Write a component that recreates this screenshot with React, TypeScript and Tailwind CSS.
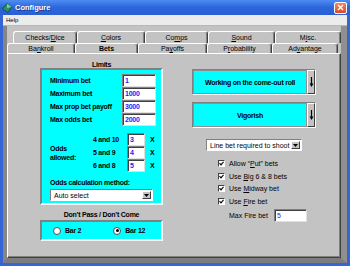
import type { ReactNode } from 'react';

const font = "font-['Liberation_Sans',Arial,sans-serif]";

function Tab({ w, children, active = false }: { w: number; children: ReactNode; active?: boolean }) {
  return (
    <div
      style={{ width: w }}
      className={`flex h-full shrink-0 items-center justify-center rounded-t-[3px] border-l border-t border-white bg-[#c3c3c3] text-[7px] leading-none text-black shadow-[inset_-1px_0_0_#808080] border-r border-r-[#404040] ${
        active ? 'relative z-10 -mb-px h-[calc(100%+1px)] font-bold' : ''
      }`}
    >
      {children}
    </div>
  );
}

function NumInput({ value, w }: { value: string; w: number }) {
  return (
    <div
      style={{ width: w }}
      className="flex h-[13px] items-center border border-t-[#808080] border-l-[#808080] border-b-[#e0e0e0] border-r-[#e0e0e0] bg-white pl-[2px] text-[7px] leading-none text-[#2020ff] shadow-[inset_1px_1px_0_#404040]"
    >
      {value}
    </div>
  );
}

function DropArrow() {
  return (
    <div className="flex h-full w-[9px] items-center justify-center border border-l-white border-t-white border-b-[#404040] border-r-[#404040] bg-[#c3c3c3]">
      <svg width="5" height="3" viewBox="0 0 5 3">
        <polygon points="0,0 5,0 2.5,3" fill="#000" />
      </svg>
    </div>
  );
}

function Select({ label, w }: { label: string; w: number }) {
  return (
    <div
      style={{ width: w }}
      className="flex h-[12px] items-center justify-between border border-t-[#808080] border-l-[#808080] border-b-white border-r-white bg-white p-px text-[7px] leading-none text-black"
    >
      <span className="pl-[2px]">{label}</span>
      <DropArrow />
    </div>
  );
}

function Check({ children }: { children: ReactNode }) {
  return (
    <div className="flex h-[12.7px] items-center gap-[4px] text-[7px] leading-none text-black">
      <div className="flex h-[7px] w-[7px] items-center justify-center border border-t-[#404040] border-l-[#404040] border-b-white border-r-white bg-white">
        <svg width="5" height="5" viewBox="0 0 5 5">
          <polyline points="0.5,2.2 2,3.8 4.5,0.8" fill="none" stroke="#000" strokeWidth="1.1" />
        </svg>
      </div>
      <span>{children}</span>
    </div>
  );
}

function Radio({ on, children }: { on?: boolean; children: ReactNode }) {
  return (
    <div className="flex items-center gap-[4px] text-[7px] font-bold leading-none tracking-[-0.25px] text-black">
      <div className="flex h-[8px] w-[8px] items-center justify-center rounded-full border border-[#505050] bg-white">
        {on && <div className="h-[3px] w-[3px] rounded-full bg-black" />}
      </div>
      <span>{children}</span>
    </div>
  );
}

function CyanButton({ label }: { label: string }) {
  return (
    <div className="flex h-[26px] w-[124px] border border-t-[#808080] border-l-[#808080] border-b-white border-r-white">
      <div className="flex flex-1 items-center justify-center border border-[#909090] bg-[#00ffff] text-[7px] font-bold leading-none tracking-[-0.25px] text-black">
        {label}
      </div>
      <div className="flex w-[8px] items-center justify-center border border-l-white border-t-white border-b-[#404040] border-r-[#404040] bg-[#c3c3c3]">
        <svg width="5" height="12" viewBox="0 0 5 12">
          <line x1="2.5" y1="1" x2="2.5" y2="9" stroke="#000" strokeWidth="1.2" />
          <polygon points="0.5,7.5 4.5,7.5 2.5,11" fill="#000" />
        </svg>
      </div>
    </div>
  );
}

export default function App() {
  const limitRows = [
    ['Minimum bet', '1'],
    ['Maximum bet', '1000'],
    ['Max prop bet payoff', '3000'],
    ['Max odds bet', '2000'],
  ];
  const odds = [
    ['4 and 10', '3'],
    ['5 and 9', '4'],
    ['6 and 8', '5'],
  ];

  return (
    <div className={`${font} flex h-[266px] w-[350px] flex-col overflow-hidden bg-[#3565d4]`}>
      {/* title bar */}
      <div className="flex h-[15px] shrink-0 items-center justify-between bg-gradient-to-b from-[#4f8cf0] via-[#2c66dc] to-[#2a5fd6] pl-[2px] pr-[3px]">
        <div className="flex items-center gap-[3px]">
          <svg width="10" height="10" viewBox="0 0 10 10">
            <polygon points="5,0.5 9.5,4 6,9.5 0.5,6" fill="#2f8f6a" stroke="#0f4a35" strokeWidth="0.8" />
            <polygon points="5,0.5 9.5,4 5,5 " fill="#6fd0a8" />
          </svg>
          <span className="text-[7.5px] font-bold leading-none text-white [text-shadow:1px_1px_0_#1a3a8a]">Configure</span>
        </div>
        <div className="flex h-[12px] w-[13px] items-center justify-center rounded-[2px] border border-white bg-gradient-to-b from-[#f08a60] to-[#d8482a]">
          <svg width="7" height="7" viewBox="0 0 7 7">
            <path d="M1 1 L6 6 M6 1 L1 6" stroke="#fff" strokeWidth="1.4" />
          </svg>
        </div>
      </div>

      <div className="mx-[3px] mb-[3px] flex flex-1 flex-col">
        {/* menu bar */}
        <div className="flex h-[11px] shrink-0 items-center border-b border-[#b8b8b8] bg-[#ececec] pl-[3px] text-[6px] leading-none text-black">
          Help
        </div>

        {/* client */}
        <div className="flex flex-1 flex-col border-b-[5px] border-l-[4px] border-r-[6px] border-b-[#7c7c7c] border-l-[#858585] border-r-[#909090] bg-[#c3c3c3] pt-[5px]">
          <div className="ml-[6px] flex h-[12px]">
            <Tab w={64}>
              Checks/<u>D</u>ice
            </Tab>
            <Tab w={68}>
              <u>C</u>olors
            </Tab>
            <Tab w={63}>
              Co<u>m</u>ps
            </Tab>
            <Tab w={67}>
              <u>S</u>ound
            </Tab>
            <Tab w={66}>
              M<u>i</u>sc.
            </Tab>
          </div>
          <div className="flex h-[10px]">
            <Tab w={68}>
              Ba<u>n</u>kroll
            </Tab>
            <Tab w={63} active>
              Bets
            </Tab>
            <Tab w={69}>
              Pa<u>y</u>offs
            </Tab>
            <Tab w={65}>
              P<u>r</u>obability
            </Tab>
            <Tab w={66}>
              Ad<u>v</u>antage
            </Tab>
          </div>

          {/* tab page */}
          <div className="flex w-[334px] flex-1 border-l border-t border-white border-b border-r border-b-[#404040] border-r-[#404040] bg-[#c3c3c3] pl-[32px] shadow-[inset_-1px_-1px_0_#808080]">
            {/* left column */}
            <div className="flex w-[123px] flex-col pt-[7px]">
              <div className="h-[7px] text-center text-[7px] font-bold leading-[7px] tracking-[-0.25px] text-black">Limits</div>
              <div className="flex h-[137px] flex-col border-2 border-t-[#808080] border-l-[#808080] border-b-white border-r-white bg-[#00ffff] pl-[8px] pr-[5px] pt-[4px] text-[7px] font-bold leading-none tracking-[-0.25px] text-black">
                {limitRows.map(([l, v]) => (
                  <div key={l} className="flex items-center justify-between">
                    <span>{l}</span>
                    <NumInput value={v} w={34} />
                  </div>
                ))}
                <div className="mt-[7px] flex items-center">
                  <div className="w-[43px] leading-[9px]">
                    Odds
                    <br />
                    allowed:
                  </div>
                  <div className="flex flex-col">
                    {odds.map(([l, v]) => (
                      <div key={l} className="flex items-center">
                        <span className="w-[34px]">{l}</span>
                        <NumInput value={v} w={18} />
                        <span className="ml-[5px]">X</span>
                      </div>
                    ))}
                  </div>
                </div>
                <div className="mt-[7px]">Odds calculation method:</div>
                <div className="mt-[3px] font-normal tracking-normal">
                  <Select label="Auto select" w={103} />
                </div>
              </div>
              <div className="mt-[6px] h-[8px] text-center text-[7px] font-bold leading-[8px] tracking-[-0.25px] text-black">
                Don’t Pass / Don’t Come
              </div>
              <div className="mt-[1px] flex h-[21px] items-center gap-[32px] border-2 border-t-[#808080] border-l-[#808080] border-b-white border-r-white bg-[#00ffff] pl-[11px]">
                <Radio>Bar 2</Radio>
                <Radio on>Bar 12</Radio>
              </div>
            </div>

            {/* right column */}
            <div className="ml-[29px] flex w-[124px] flex-col pt-[15px]">
              <CyanButton label="Working on the come-out roll" />
              <div className="mt-[7px]">
                <CyanButton label="Vigorish" />
              </div>
              <div className="mt-[11px] flex justify-center">
                <Select label="Line bet required to shoot" w={96} />
              </div>
              <div className="ml-[26px] mt-[6px] flex flex-col">
                <Check>
                  Allow “<u>P</u>ut” bets
                </Check>
                <Check>
                  Use <u>B</u>ig 6 &amp; 8 bets
                </Check>
                <Check>
                  Use <u>M</u>idway bet
                </Check>
                <Check>
                  Use <u>F</u>ire bet
                </Check>
                <div className="mt-[1px] flex items-center text-[7px] leading-none text-black">
                  <span className="ml-[11px] w-[45px]">Max Fire bet</span>
                  <NumInput value="5" w={33} />
                </div>
              </div>
            </div>
          </div>
        </div>
      </div>
    </div>
  );
}
